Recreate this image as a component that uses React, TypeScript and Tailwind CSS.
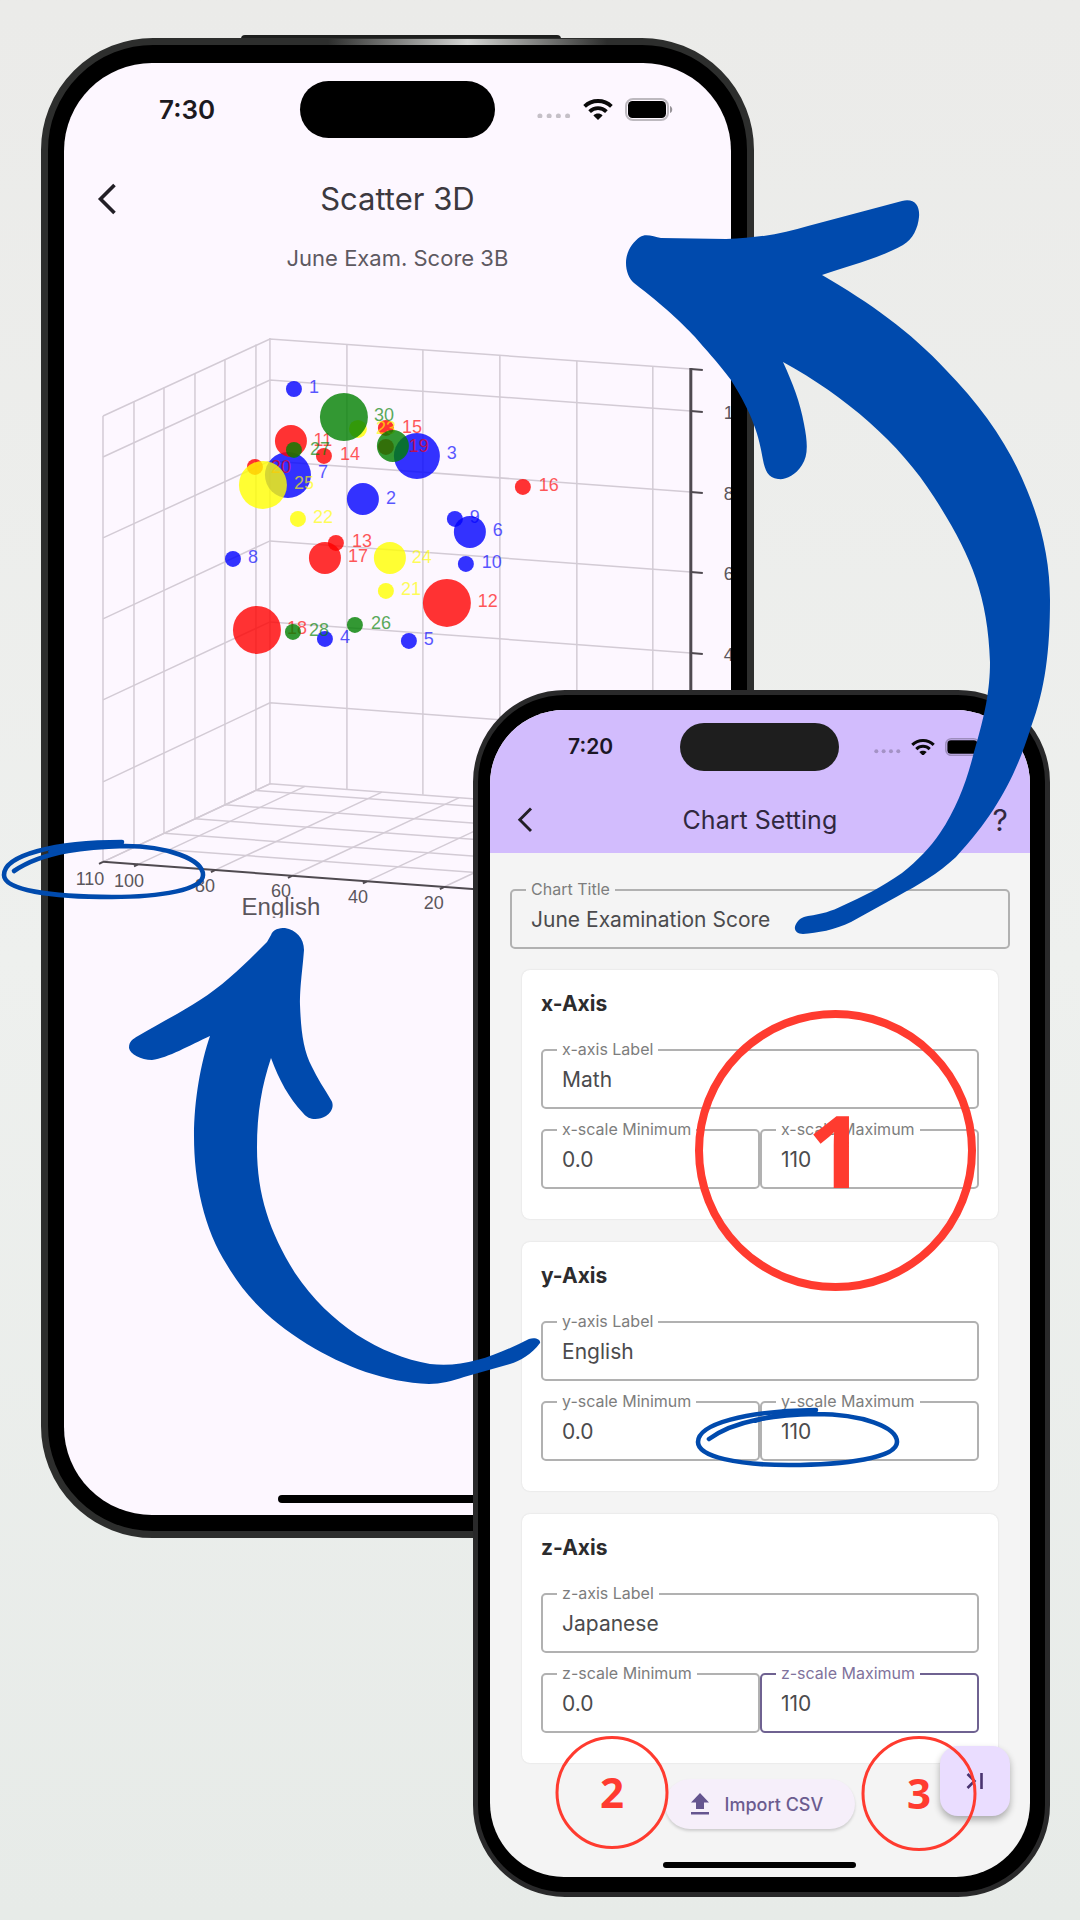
import React from "react";

const BLUE = "#004aad";
const RED = "#ff3b2f";

type Bubble = {
  x: number;
  y: number;
  r: number;
  color: string;
  label?: string;
  lx?: number;
  ly?: number;
};

const B = "#0000ff";
const R = "#ff0000";
const Y = "#ffff00";
const G = "#008000";

const bubbles: Bubble[] = [
  { x: 294, y: 389, r: 8, color: B, label: "1", lx: 314, ly: 387 },
  { x: 363, y: 499, r: 16, color: B, label: "2", lx: 391, ly: 498 },
  { x: 417, y: 456, r: 23, color: B, label: "3", lx: 452, ly: 453 },
  { x: 325, y: 639, r: 8, color: B, label: "4", lx: 345, ly: 637 },
  { x: 409, y: 641, r: 8, color: B, label: "5", lx: 429, ly: 639 },
  { x: 455, y: 519, r: 8, color: B, label: "9", lx: 475, ly: 517 },
  { x: 470, y: 532, r: 16, color: B, label: "6", lx: 498, ly: 530 },
  { x: 288, y: 475, r: 23, color: B, label: "7", lx: 323, ly: 472 },
  { x: 233, y: 559, r: 8, color: B, label: "8", lx: 253, ly: 557 },
  { x: 466, y: 564, r: 8, color: B, label: "10", lx: 492, ly: 562 },
  { x: 291, y: 441, r: 16, color: R, label: "11", lx: 323, ly: 440 },
  { x: 447, y: 603, r: 24, color: R, label: "12", lx: 488, ly: 601 },
  { x: 336, y: 543, r: 8, color: R, label: "13", lx: 362, ly: 541 },
  { x: 324, y: 456, r: 8, color: R, label: "14", lx: 350, ly: 454 },
  { x: 386, y: 428, r: 8, color: R, label: "15", lx: 412, ly: 427 },
  { x: 523, y: 487, r: 8, color: R, label: "16", lx: 549, ly: 485 },
  { x: 325, y: 558, r: 16, color: R, label: "17", lx: 358, ly: 556 },
  { x: 257, y: 630, r: 24, color: R, label: "18", lx: 297, ly: 628 },
  { x: 386, y: 447, r: 8, color: R, label: "19", lx: 419, ly: 446 },
  { x: 255, y: 467, r: 8, color: R, label: "20", lx: 281, ly: 467 },
  { x: 386, y: 591, r: 8, color: Y, label: "21", lx: 411, ly: 589 },
  { x: 298, y: 519, r: 8, color: Y, label: "22", lx: 323, ly: 517 },
  { x: 358, y: 429, r: 9, color: Y, label: "23", lx: 386, ly: 428 },
  { x: 390, y: 558, r: 16, color: Y, label: "24", lx: 422, ly: 557 },
  { x: 263, y: 485, r: 24, color: Y, label: "25", lx: 304, ly: 483 },
  { x: 355, y: 625, r: 8, color: G, label: "26", lx: 381, ly: 623 },
  { x: 294, y: 450, r: 8, color: G, label: "27", lx: 320, ly: 449 },
  { x: 293, y: 632, r: 8, color: G, label: "28", lx: 319, ly: 630 },
  { x: 393, y: 446, r: 16, color: G },
  { x: 344, y: 417, r: 24, color: G, label: "30", lx: 384, ly: 415 },
];

const sideXs = [103, 134, 164, 195, 225, 256, 270];
const backXs = [270, 347, 423, 500, 577, 653, 691];
const leftYs = [416, 457, 538, 619, 700, 782, 862];
const cornerYs = [339, 380, 461, 541, 622, 703, 784];
const rightYs = [369, 411, 492, 572, 653, 734, 815];
const axisTicks = [
  { x: 103, label: "110", lx: 90, ly: 885 },
  { x: 138, label: "100", lx: 129, ly: 887 },
  { x: 215, label: "80", lx: 205, ly: 892 },
  { x: 292, label: "60", lx: 281, ly: 897 },
  { x: 367, label: "40", lx: 358, ly: 903 },
  { x: 444, label: "20", lx: 434, ly: 909 },
];
const scaleLabels = ["", "100", "80", "60", "40", "20", "0"];

const sideDrop = (x: number) => ((x - 103) / 167) * 78;
const backDrop = (x: number) => ((x - 270) / 421) * 30;

function Chart() {
  return (
    <svg
      viewBox="64 300 667 640"
      className="block w-full"
      role="img"
      aria-label="3D scatter chart"
      fontFamily="Liberation Sans, Arial, sans-serif"
    >
      <defs>
        <clipPath id="axis-name">
          <rect x="220" y="890" width="120" height="28" />
        </clipPath>
      </defs>
      <g stroke="#d3cbd5" strokeWidth="1.5" fill="none">
        {sideXs.map((x) => (
          <line key={x} x1={x} x2={x} y1={416 - sideDrop(x)} y2={862 - sideDrop(x)} />
        ))}
        {backXs.slice(1).map((x) => (
          <line key={x} x1={x} x2={x} y1={339 + backDrop(x)} y2={784 + backDrop(x)} />
        ))}
        {cornerYs.map((y, i) => (
          <polyline key={y} points={`103,${leftYs[i]} 270,${y} 691,${rightYs[i]}`} />
        ))}
        {sideXs.slice(1, 6).map((x) => (
          <line
            key={x}
            x1={x}
            y1={862 - sideDrop(x)}
            x2={x + 421}
            y2={893 - sideDrop(x)}
          />
        ))}
        {axisTicks.map((t) => {
          const y = 862 + (t.x - 103) * 0.074;
          return <line key={t.x} x1={t.x} y1={y} x2={t.x + 167} y2={y - 78} />;
        })}
      </g>
      <g stroke="#4f4a50" strokeWidth="2">
        <line x1="103" y1="862" x2="524" y2="893" />
        {axisTicks.map((t) => {
          const y = 862 + (t.x - 103) * 0.074;
          return <line key={t.x} x1={t.x} y1={y} x2={t.x - 4} y2={y + 2} />;
        })}
        <line x1="691" y1="368" x2="691" y2="815" strokeWidth="3" />
        {rightYs.map((y) => (
          <line key={y} x1="691" x2="703" y1={y} y2={y + 1} />
        ))}
      </g>
      {bubbles.map((b, i) => (
        <g key={i} fill={b.color}>
          <circle cx={b.x} cy={b.y} r={b.r} opacity="0.8" />
          {b.label && (
            <text x={b.lx} y={(b.ly ?? 0) + 6} fontSize="18" textAnchor="middle" opacity="0.65">
              {b.label}
            </text>
          )}
        </g>
      ))}
      <g fill="#5b565c" fontSize="18">
        {axisTicks.map((t) => (
          <text key={t.x} x={t.lx} y={t.ly} textAnchor="middle">
            {t.label}
          </text>
        ))}
        {rightYs.map((y, i) => (
          <text key={y} x="724" y={y + 8}>
            {scaleLabels[i]}
          </text>
        ))}
        <text x="281" y="915" fontSize="24" textAnchor="middle" clipPath="url(#axis-name)">
          English
        </text>
      </g>
    </svg>
  );
}

function Wifi({ className }: { className: string }) {
  return (
    <svg viewBox="0 0 30 21" className={className} aria-hidden="true">
      <g fill="none" stroke="#0a0a0a" strokeWidth="3.8">
        <path d="M1.6 7.4 C9 0.2 21 0.2 28.4 7.4" />
        <path d="M6.6 12.6 C11.4 8 18.6 8 23.4 12.6" />
      </g>
      <path d="M10.4 16.4 C13 14 17 14 19.6 16.4 L15 21 Z" fill="#0a0a0a" />
    </svg>
  );
}

function Battery({ className }: { className: string }) {
  return (
    <svg viewBox="0 0 48 23" className={className} aria-hidden="true">
      <rect x="1" y="1" width="42" height="21" rx="7" fill="none" stroke="#000" strokeOpacity="0.25" strokeWidth="2" />
      <rect x="3" y="3" width="38" height="17" rx="4.5" fill="#000" />
      <path d="M45 8 C48 9 48 14 45 15 Z" fill="#000" fillOpacity="0.4" />
    </svg>
  );
}

function Dots({ className }: { className: string }) {
  return (
    <svg viewBox="0 0 35 6" className={className} aria-hidden="true">
      {[3, 12.5, 22, 31.5].map((x) => (
        <circle key={x} cx={x} cy="3" r="2.6" fill="#000" fillOpacity="0.22" />
      ))}
    </svg>
  );
}

function Back({ className }: { className: string }) {
  return (
    <svg viewBox="0 0 20 32" className={className} fill="none" stroke="#221f26" strokeWidth="3.6" aria-hidden="true">
      <path d="M17.5 2 L3.5 16 L17.5 30" />
    </svg>
  );
}

function ScatterPhone() {
  return (
    <section className="relative ml-[3.8%] mt-[38px] aspect-[713/1500] w-[66%] self-start [grid-area:1/1]">
      <div className="absolute -top-[3px] left-[28%] h-2 w-[45%] rounded-full bg-[#1d1e1d]" />
      <div className="relative h-full rounded-[112px] border-[7px] border-[#2d2e2d] bg-black p-4 pt-[18px]">
        <div className="absolute -top-[6px] left-[40%] h-[6px] w-[40%] bg-gradient-to-r from-transparent via-[#d5d6d4] to-transparent" />
        <div className="flex h-full flex-col overflow-hidden rounded-[88px] bg-[#fdf7ff]">
          <div className="grid grid-cols-3 items-center pt-[18px]">
            <time className="pl-[95px] text-[26px] leading-8 font-semibold text-[#1c1a1f]">7:30</time>
            <div className="h-[57px] w-[195px] justify-self-center rounded-full bg-black" />
            <div className="flex items-center justify-end gap-3 pr-[58px]">
              <Dots className="mt-3 w-[34px]" />
              <Wifi className="w-[30px]" />
              <Battery className="w-12" />
            </div>
          </div>
          <header className="grid grid-cols-[80px_1fr_80px] items-center pt-9">
            <button type="button" aria-label="Back" className="pl-[33px]">
              <Back className="w-5" />
            </button>
            <h1 className="text-center text-[31px] leading-[50px] text-[#3c393f]">Scatter 3D</h1>
          </header>
          <p className="pt-5 text-center text-[22px] leading-7 text-[#5d5961]">June Exam. Score 3B</p>
          <div className="pt-[28px]">
            <Chart />
          </div>
          <div className="mx-auto mt-auto mb-3 h-2 w-[239px] rounded-full bg-black" />
        </div>
      </div>
    </section>
  );
}

function Field({
  id,
  label,
  value,
  active,
  surface = "bg-white",
}: {
  id: string;
  label: string;
  value: string;
  active?: boolean;
  surface?: string;
}) {
  return (
    <div className="relative min-w-0 flex-1">
      <label
        htmlFor={id}
        className={`absolute -top-2 left-4 px-[5px] text-[16px] leading-4 ${surface} ${
          active ? "text-[#7f739c]" : "text-[#7d7d7d]"
        }`}
      >
        {label}
      </label>
      <input
        id={id}
        defaultValue={value}
        className={`h-[60px] w-full rounded-[5px] border-2 bg-transparent px-[19px] text-[21px] leading-6 text-[#4b4b4d] outline-none ${
          active ? "border-[#6f6291]" : "border-[#b1b1b1]"
        }`}
      />
    </div>
  );
}

function AxisCard({ axis, name, active }: { axis: string; name: string; active?: boolean }) {
  return (
    <section className="rounded-lg bg-white px-[19px] pt-5 pb-[30px] shadow-[0_0_2px_rgba(0,0,0,0.12)]">
      <h2 className="text-[21px] leading-7 font-bold text-[#2c2c2e]">{axis}-Axis</h2>
      <div className="mt-[31px] flex">
        <Field id={`${axis}-label`} label={`${axis}-axis Label`} value={name} />
      </div>
      <div className="mt-5 flex">
        <Field id={`${axis}-min`} label={`${axis}-scale Minimum`} value="0.0" />
        <Field id={`${axis}-max`} label={`${axis}-scale Maximum`} value="110" active={active} />
      </div>
    </section>
  );
}

function SettingPhone() {
  return (
    <section className="relative mt-[690px] mr-[2.8%] w-[53.4%] self-start justify-self-end rounded-[92px] border-[5px] border-[#29292a] bg-black py-[15px] pr-[15px] pl-3 [grid-area:1/1]">
      <div className="relative overflow-hidden rounded-[74px] bg-[#f4f4f4]">
        <header className="bg-[#d2bcfd] pb-[18px]">
          <div className="grid grid-cols-3 items-center pt-[13px]">
            <time className="pl-[78px] text-[21px] leading-6 font-semibold text-[#1b1626]">7:20</time>
            <div className="h-12 w-[159px] justify-self-center rounded-full bg-[#1e1e1e]" />
            <div className="flex items-center justify-end gap-[10px] pr-[47px]">
              <Dots className="mt-[9px] w-[27px]" />
              <Wifi className="w-6" />
              <Battery className="w-[38px]" />
            </div>
          </div>
          <div className="grid grid-cols-[60px_1fr_60px] items-center pt-[34px]">
            <button type="button" aria-label="Back" className="pl-[27px]">
              <Back className="w-4" />
            </button>
            <h1 className="text-center text-[25px] leading-[30px] text-[#31283f]">Chart Setting</h1>
            <button type="button" aria-label="Help" className="pr-[22px] text-right text-[30px] leading-[30px] text-[#31283f]">
              ?
            </button>
          </div>
        </header>
        <div className="px-5 pt-9">
          <div className="flex">
            <Field id="chart-title" label="Chart Title" value="June Examination Score" surface="bg-[#f4f4f4]" />
          </div>
          <div className="mx-3 mt-[21px] flex flex-col gap-[23px]">
            <AxisCard axis="x" name="Math" />
            <AxisCard axis="y" name="English" />
            <AxisCard axis="z" name="Japanese" active />
          </div>
        </div>
        <div className="flex justify-center pt-4">
          <button
            type="button"
            className="flex h-[50px] items-center gap-4 rounded-full bg-[#f6effa] pr-8 pl-[26px] text-[18px] font-medium text-[#6b5c8f] shadow-[0_2px_3px_rgba(0,0,0,0.16)]"
          >
            <svg viewBox="0 0 18 22" className="w-[18px]" fill="#65558f" aria-hidden="true">
              <path d="M9 0 L18 9.5 H13 V16 H5 V9.5 H0 Z M0 19 H18 V21.6 H0 Z" />
            </svg>
            Import CSV
          </button>
        </div>
        <div className="mx-auto mt-[33px] mb-[9px] h-[6px] w-[193px] rounded-full bg-black" />
        <button
          type="button"
          aria-label="Go to end"
          className="absolute right-5 bottom-[61px] flex size-[70px] items-center justify-center rounded-[18px] bg-[#eaddff] shadow-[0_4px_7px_rgba(0,0,0,0.3)]"
        >
          <svg viewBox="0 0 18 16" className="w-[18px]" fill="none" stroke="#4a3470" strokeWidth="2.6" aria-hidden="true">
            <path d="M1.5 1 L8.5 8 L1.5 15 M15.5 0 V16" />
          </svg>
        </button>
      </div>
    </section>
  );
}

function Annotations() {
  return (
    <svg
      viewBox="0 0 1080 1920"
      className="pointer-events-none absolute top-0 left-0 w-full"
      fontFamily="Open Sans, sans-serif"
      fontWeight="700"
    >
      <g fill={BLUE}>
        <path d="M626 263 C626 251 633 242 640 237 C646 233 654 237 661 238 L726 239 C760 238 785 233 808 226 L902 201 C915 198 920 206 919 217 C918 228 913 239 903 245 C880 258 848 266 822 275 C870 303 910 331 946 370 C983 408 1010 447 1027 490 C1042 526 1050 562 1050 600 C1050 650 1045 690 1031 727 C1017 772 998 812 956 857 C938 874 918 885 898 896 L851 922 C835 930 817 933 803 934 C796 934 793 929 796 924 C799 919 802 917 808 916 C822 914 832 911 842 906 C862 897 882 887 902 873 C918 860 930 848 940 833 C957 808 967 780 974 752 C985 715 990 690 990 662 C988 592 968 550 934 497 C900 443 845 396 783 362 C793 384 800 402 804 424 C808 444 808 456 802 465 C795 476 785 480 778 479 C768 478 765 470 763 460 C759 436 753 415 731 380 C716 360 706 350 695 337 C680 321 665 307 634 283 C629 279 626 271 626 263 Z" />
        <path d="M271 935 C273 929 279 928 285 928 C296 930 304 938 304 950 C302 975 300 985 300 1005 C301 1030 303 1050 312 1067 C317 1078 324 1088 331 1100 C335 1106 331 1113 326 1116 C319 1120 309 1121 303 1113 C289 1098 279 1080 271 1058 C262 1085 257 1112 257 1148 C257 1195 270 1233 295 1273 C330 1325 380 1355 430 1364 C465 1368 495 1356 529 1339 C536 1337 541 1340 540 1343 C532 1354 520 1361 510 1364 L464 1377 C452 1381 441 1384 429 1384 C385 1382 345 1367 307 1344 C272 1322 247 1299 227 1265 C204 1229 194 1182 194 1136 C194 1100 201 1062 210 1036 C190 1045 168 1058 152 1060 C141 1060 130 1054 129 1048 C129 1041 133 1039 138 1036 C160 1023 180 1013 200 1000 C225 984 246 963 267 942 Z" />
      </g>
      <g fill="none" stroke={BLUE} strokeWidth="4.6" strokeLinecap="round">
        <path d="M14 871 C45 850 90 847 125 846 C166 846 203 859 203 875 C203 890 160 897 112 897 C50 897 4 890 4 875 C4 855 55 842 122 842" />
        <path d="M50 852 C70 846 95 844 120 843" strokeWidth="4" />
        <path d="M709 1439 C735 1420 775 1415 816 1414 C862 1414 897 1427 897 1442 C897 1458 845 1465 789 1465 C738 1465 698 1457 698 1442 C698 1424 745 1411 816 1410" />
        <path d="M755 1421 C772 1415 790 1413 814 1411" strokeWidth="4" />
      </g>
      <g fill="none" stroke={RED}>
        <circle cx="835.5" cy="1150.5" r="136.5" strokeWidth="8" />
        <circle cx="612" cy="1792.5" r="55" strokeWidth="3" />
        <circle cx="919" cy="1793.5" r="56" strokeWidth="3" />
      </g>
      <g fill={RED} textAnchor="middle">
        <text x="836" y="1188" fontSize="101">
          1
        </text>
        <text x="612" y="1808" fontSize="42">
          2
        </text>
        <text x="919" y="1809" fontSize="42">
          3
        </text>
      </g>
    </svg>
  );
}

export default function App() {
  return (
    <main className="relative grid min-h-screen overflow-hidden bg-gradient-to-b from-[#ebebe9] via-[#eef0ee] to-[#e7ebe8] font-['Inter',sans-serif]">
      <ScatterPhone />
      <SettingPhone />
      <Annotations />
    </main>
  );
}
